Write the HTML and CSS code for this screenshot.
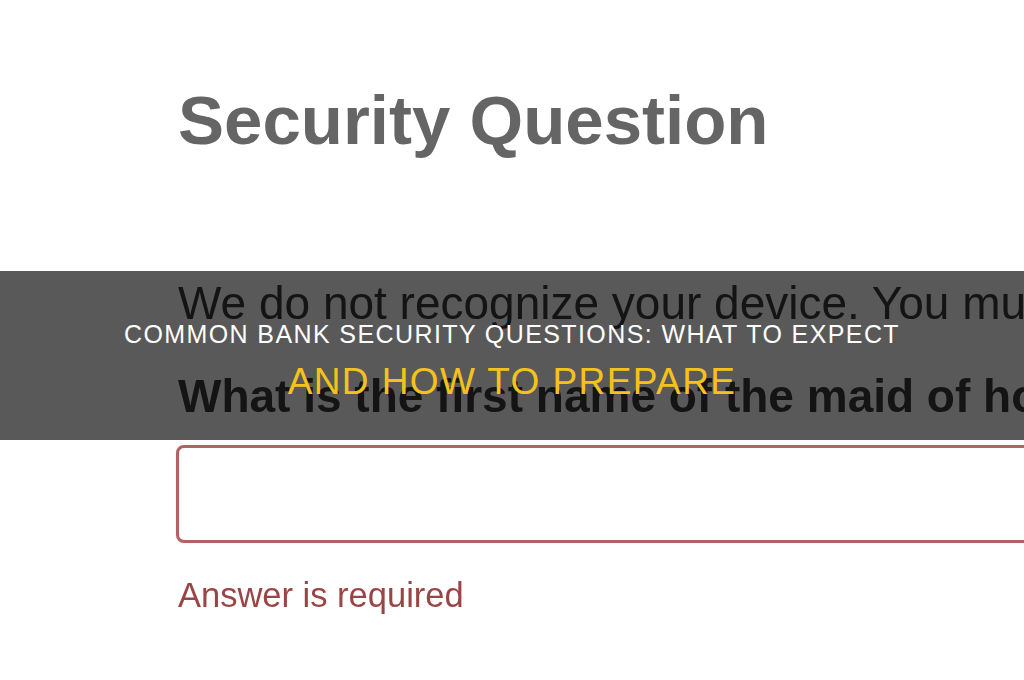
FILE: index.html
```html
<!DOCTYPE html>
<html lang="en">
<head>
    <meta charset="UTF-8">
    <meta name="viewport" content="width=device-width, initial-scale=1.0">
    <title>Common Bank Security Questions</title>
    <link rel="stylesheet" href="styles.css">
</head>
<body>
    <div class="form">
        <h1 class="form-title">Security Question</h1>
        <p class="notice">We do not recognize your device. You must answer your security question.</p>
        <p class="question">What is the first name of the maid of honor at your wedding?</p>
        <div class="answer-box"></div>
        <div class="error">Answer is required</div>
    </div>

    <!-- caption band over the form -->
    <div class="banner">
        <div class="banner-line">COMMON BANK SECURITY QUESTIONS: WHAT TO EXPECT</div>
        <div class="banner-line highlight">AND HOW TO PREPARE</div>
    </div>
</body>
</html>
```

FILE: styles.css
```css
html, body {
    margin: 0;
    height: 100%;
    overflow: hidden;
    background-color: #fff;
}
body {
    position: relative;
    font-family: "Liberation Sans", Arial, sans-serif;
}
.form {
    padding-left: 178px;
    white-space: nowrap;
    filter: blur(0.6px);
}
.form-title {
    margin: 81px 0 0;
    font-size: 69px;
    line-height: 80px;
    font-weight: bold;
    color: #656565;
}
.notice {
    margin: 116px 0 0;
    font-size: 46px;
    line-height: 52px;
    color: #3a3a3a;
}
.question {
    margin: 41px 0 0;
    font-size: 46px;
    line-height: 52px;
    font-weight: bold;
    color: #3a3a3a;
}
.answer-box {
    margin: 23px 0 0 -2px;
    width: 1000px;
    height: 92px;
    border: 3px solid #b36263;
    border-radius: 8px;
    box-shadow: 0 0 1px #e0aaaa;
}
.error {
    margin-top: 32px;
    font-size: 34.5px;
    line-height: 40px;
    color: #9a4545;
}
.banner {
    position: absolute;
    top: 271px;
    left: 0;
    right: 0;
    height: 169px;
    padding-top: 48px;
    box-sizing: border-box;
    background-color: rgba(0, 0, 0, 0.65);
    text-align: center;
}
.banner-line {
    font-size: 25px;
    line-height: 30px;
    letter-spacing: 1.4px;
    color: #fff;
}
.highlight {
    margin-top: 11px;
    font-size: 37px;
    line-height: 44px;
    color: #f5c21b;
}
```
